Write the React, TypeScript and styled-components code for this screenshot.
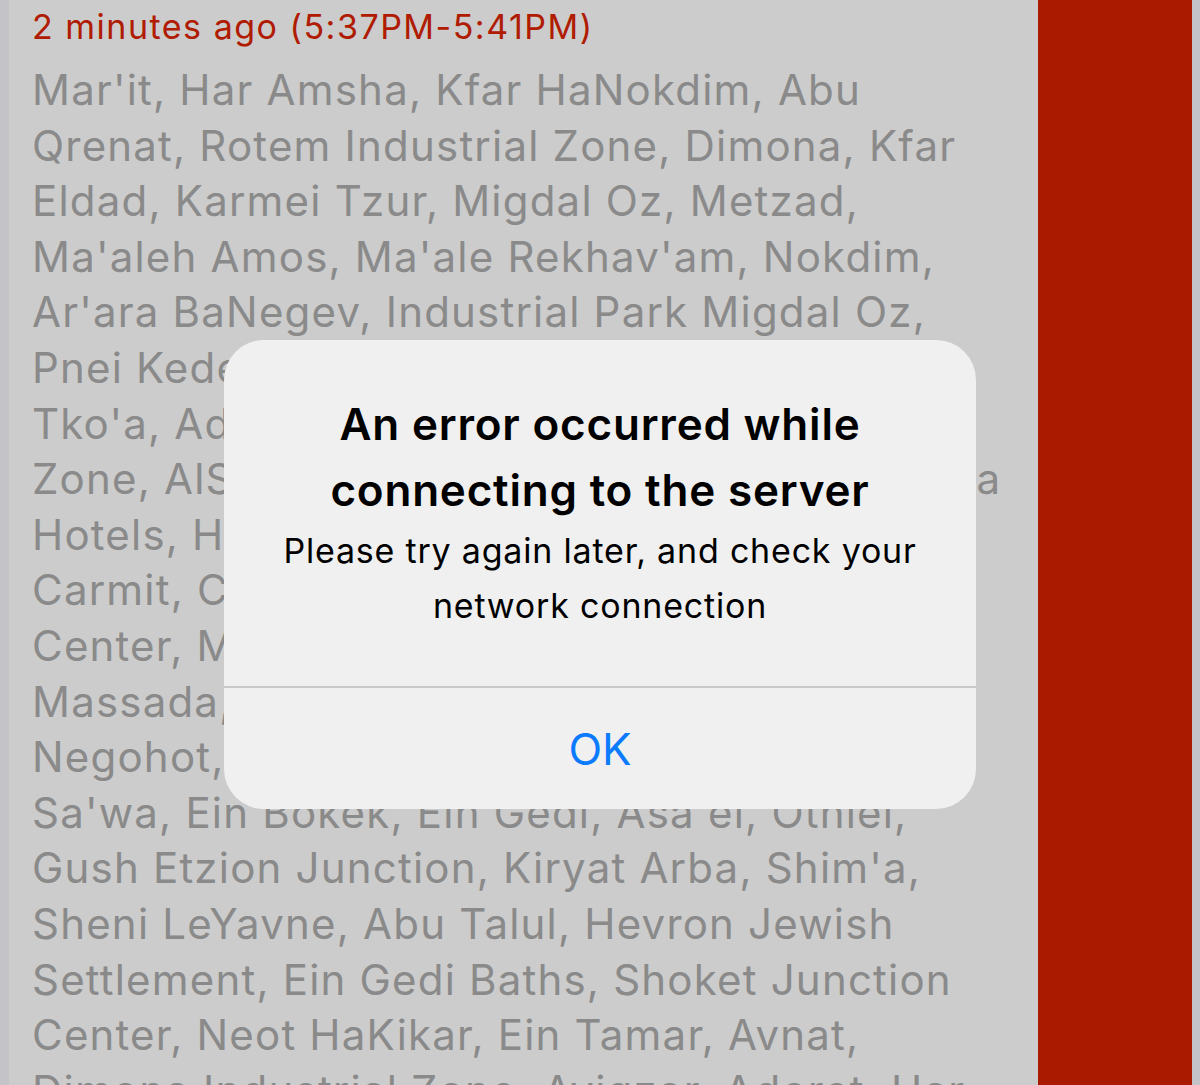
import React from 'react';
import styled, { createGlobalStyle } from 'styled-components';

const GlobalStyle = createGlobalStyle`
  html, body {
    margin: 0;
    padding: 0;
    height: 100%;
    overflow: hidden;
  }
  body {
    font-family: Inter, "Liberation Sans", sans-serif;
    -webkit-font-smoothing: antialiased;
  }
  #root {
    height: 100%;
  }
`;

const Screen = styled.div`
  position: relative;
  display: flex;
  height: 1085px;
  width: 1200px;
  overflow: hidden;
`;

const EdgeStrip = styled.div<{ $width: number }>`
  width: ${p => p.$width}px;
  flex-shrink: 0;
  background-color: #f6f6fb;
`;

const AlertPanel = styled.div`
  flex: 1;
  background-color: #ffffff;
  padding: 0 0 0 23px;
  overflow: hidden;
`;

const ColorBar = styled.div`
  width: 154px;
  flex-shrink: 0;
  background-color: #d52100;
`;

const TimeLabel = styled.div`
  color: #dc2400;
  font-size: 34px;
  line-height: 54px;
  letter-spacing: 1.5px;
  white-space: nowrap;
`;

const CityList = styled.div`
  margin-top: 8px;
  color: #adadad;
  font-size: 42px;
  line-height: 55.6px;
  letter-spacing: 1.2px;
`;

const CityLine = styled.div`
  white-space: nowrap;
`;

const Dimmer = styled.div`
  position: absolute;
  inset: 0;
  background-color: rgba(0, 0, 0, 0.2);
  display: flex;
  justify-content: center;
  align-items: flex-start;
  padding-top: 340px;
`;

const Dialog = styled.div`
  width: 752px;
  background-color: #f0f0f0;
  border-radius: 40px;
  overflow: hidden;
  text-align: center;
`;

const DialogBody = styled.div`
  padding: 51px 30px 53px;
  border-bottom: 2px solid #c9c9cb;
`;

const DialogTitle = styled.div`
  font-size: 44px;
  font-weight: 600;
  line-height: 66px;
  letter-spacing: 0.8px;
  color: #000;
`;

const DialogMessage = styled.div`
  font-size: 34px;
  line-height: 55px;
  letter-spacing: 0.8px;
  color: #000;
`;

const DialogButton = styled.button`
  display: block;
  width: 100%;
  height: 121px;
  border: none;
  background: transparent;
  color: #0a7aff;
  font-family: inherit;
  font-size: 44px;
  cursor: pointer;
`;

const cityLines = [
  "Mar'it, Har Amsha, Kfar HaNokdim, Abu",
  'Qrenat, Rotem Industrial Zone, Dimona, Kfar',
  'Eldad, Karmei Tzur, Migdal Oz, Metzad,',
  "Ma'aleh Amos, Ma'ale Rekhav'am, Nokdim,",
  "Ar'ara BaNegev, Industrial Park Migdal Oz,",
  'Pnei Kedem, Mezadot Yehuda, Ibim, Yatir,',
  "Tko'a, Adora, Kramim, Beit Haggai, Idan",
  'Zone, AlSayyid, Tel Arad, Kuseife, Ein Hatzeva',
  'Hotels, Hura, Arad, Neve Zohar, Mitzpe,',
  'Carmit, Carmel, Lehavim, Sansana, Ma’on,',
  'Center, Metzoke Dragot, Ovnat, Dead Sea,',
  'Massada, Kochav HaShahar, Susiya, Yatir,',
  'Negohot, Beit Yatir, Otniel, Shani, Lakiya,',
  "Sa'wa, Ein Bokek, Ein Gedi, Asa'el, Otniel,",
  "Gush Etzion Junction, Kiryat Arba, Shim'a,",
  'Sheni LeYavne, Abu Talul, Hevron Jewish',
  'Settlement, Ein Gedi Baths, Shoket Junction',
  'Center, Neot HaKikar, Ein Tamar, Avnat,',
  'Dimona Industrial Zone, Avigzor, Adoret, Har',
];

const App: React.FC = () => {
  return (
    <>
      <GlobalStyle />
      <Screen>
        <EdgeStrip $width={9} />
        <AlertPanel>
          <TimeLabel>2 minutes ago (5:37PM-5:41PM)</TimeLabel>
          <CityList>
            {cityLines.map((line, i) => (
              <CityLine key={i}>{line}</CityLine>
            ))}
          </CityList>
        </AlertPanel>
        <ColorBar />
        <EdgeStrip $width={8} />
        <Dimmer>
          <Dialog role="alertdialog">
            <DialogBody>
              <DialogTitle>
                An error occurred while
                <br />
                connecting to the server
              </DialogTitle>
              <DialogMessage>
                Please try again later, and check your
                <br />
                network connection
              </DialogMessage>
            </DialogBody>
            <DialogButton>OK</DialogButton>
          </Dialog>
        </Dimmer>
      </Screen>
    </>
  );
};

export default App;
